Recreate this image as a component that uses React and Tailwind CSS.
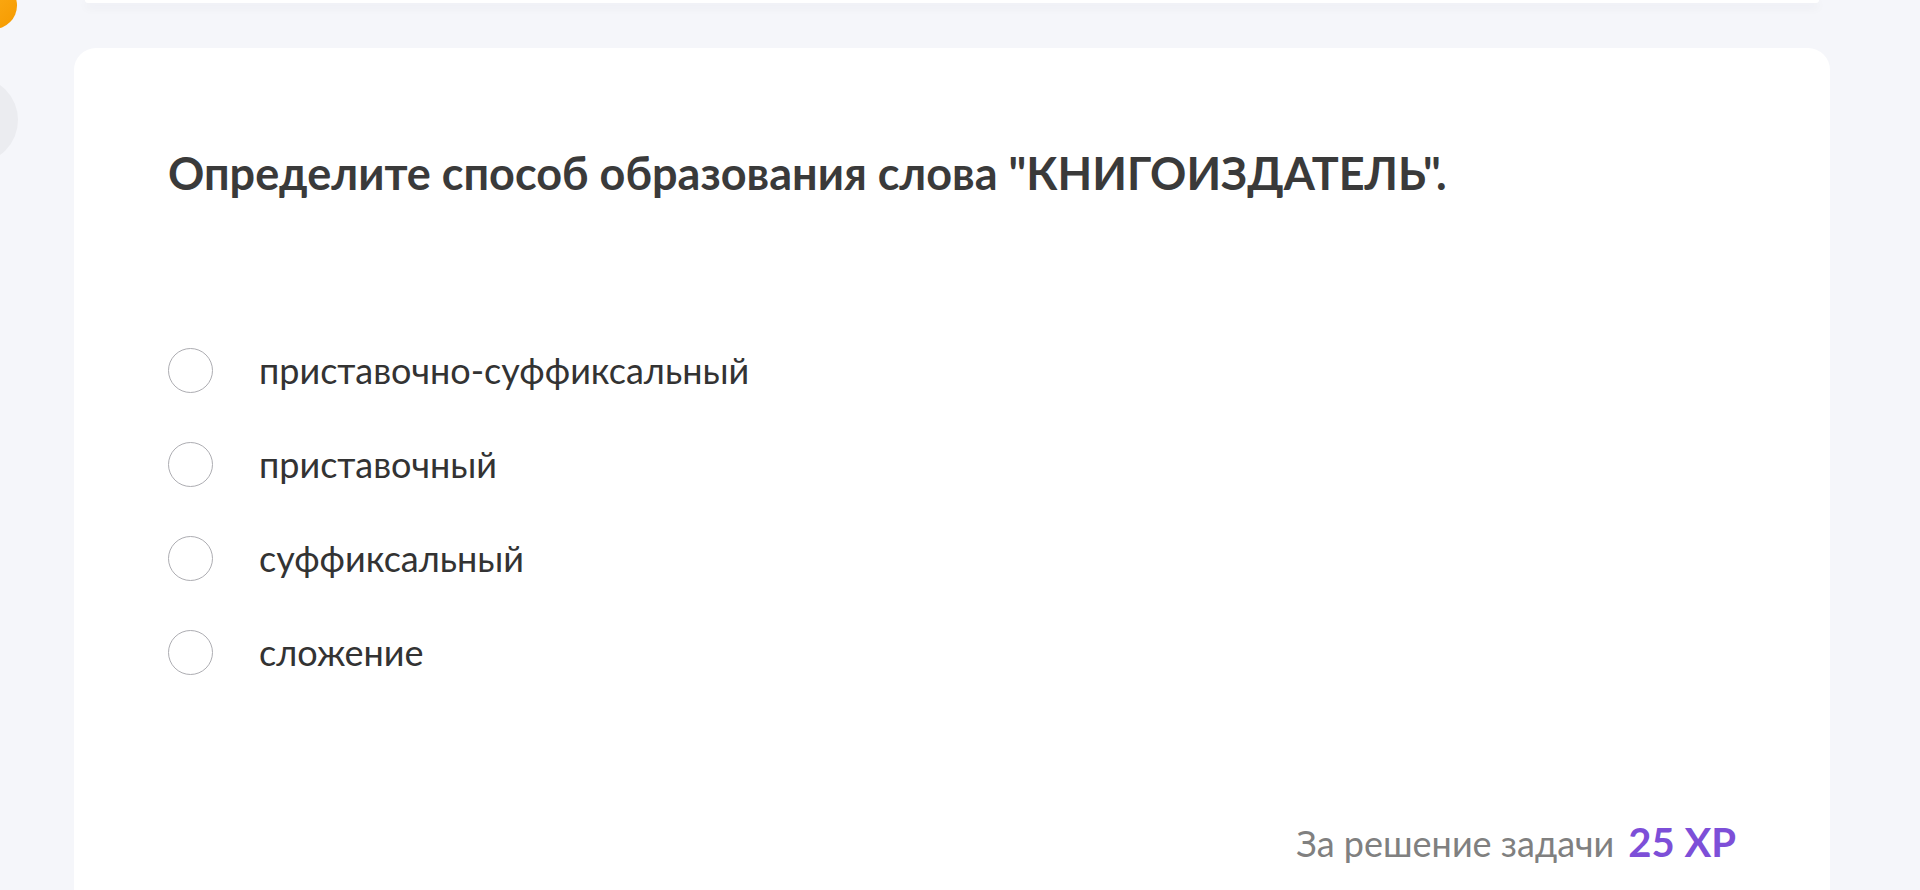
import React from "react";

const OPTIONS = [
  "приставочно-суффиксальный",
  "приставочный",
  "суффиксальный",
  "сложение",
];

function Option({ label }) {
  return (
    <label className="flex cursor-pointer items-center gap-[46px]">
      <span className="h-[45px] w-[45px] shrink-0 rounded-full border-[1.5px] border-[#adadb2] bg-white" />
      <span className="text-[36px] leading-[48px] text-[#333333]">{label}</span>
    </label>
  );
}

export default function App() {
  return (
    <div
      className="relative h-[890px] w-full overflow-hidden bg-[#f5f6fa]"
      style={{ fontFamily: "Lato, 'Open Sans', sans-serif" }}
    >
      {/* sidebar leftovers */}
      <div className="absolute -left-[30px] -top-[18px] h-[47px] w-[47px] rounded-full bg-gradient-to-br from-[#ffb21a] to-[#f59a00]" />
      <div className="absolute -left-[68px] top-[77px] h-[86px] w-[86px] rounded-full bg-[#ebecf0]" />

      <div className="ml-[74px] w-[1756px]">
        {/* bottom edge of the previous card */}
        <div className="mx-[11px] h-[3px] rounded-b-2xl bg-white shadow-[0_4px_10px_rgba(20,30,60,0.08)]" />

        <div className="mt-[45px] rounded-[22px] bg-white pb-10 pl-[94px] pr-[94px] pt-[98px]">
          <h1 className="text-[45px] font-bold leading-[54px] text-[#3a3a3a]">
            Определите способ образования слова "КНИГОИЗДАТЕЛЬ".
          </h1>

          <div className="mt-[146px] flex flex-col gap-[46px]">
            {OPTIONS.map((o) => (
              <Option key={o} label={o} />
            ))}
          </div>

          <div className="mt-[136px] flex items-baseline justify-end gap-[14px]">
            <span className="text-[36px] text-[#808080]">За решение задачи</span>
            <span className="text-[40px] font-bold text-[#7d4fd8]">25 XP</span>
          </div>
        </div>
      </div>
    </div>
  );
}
